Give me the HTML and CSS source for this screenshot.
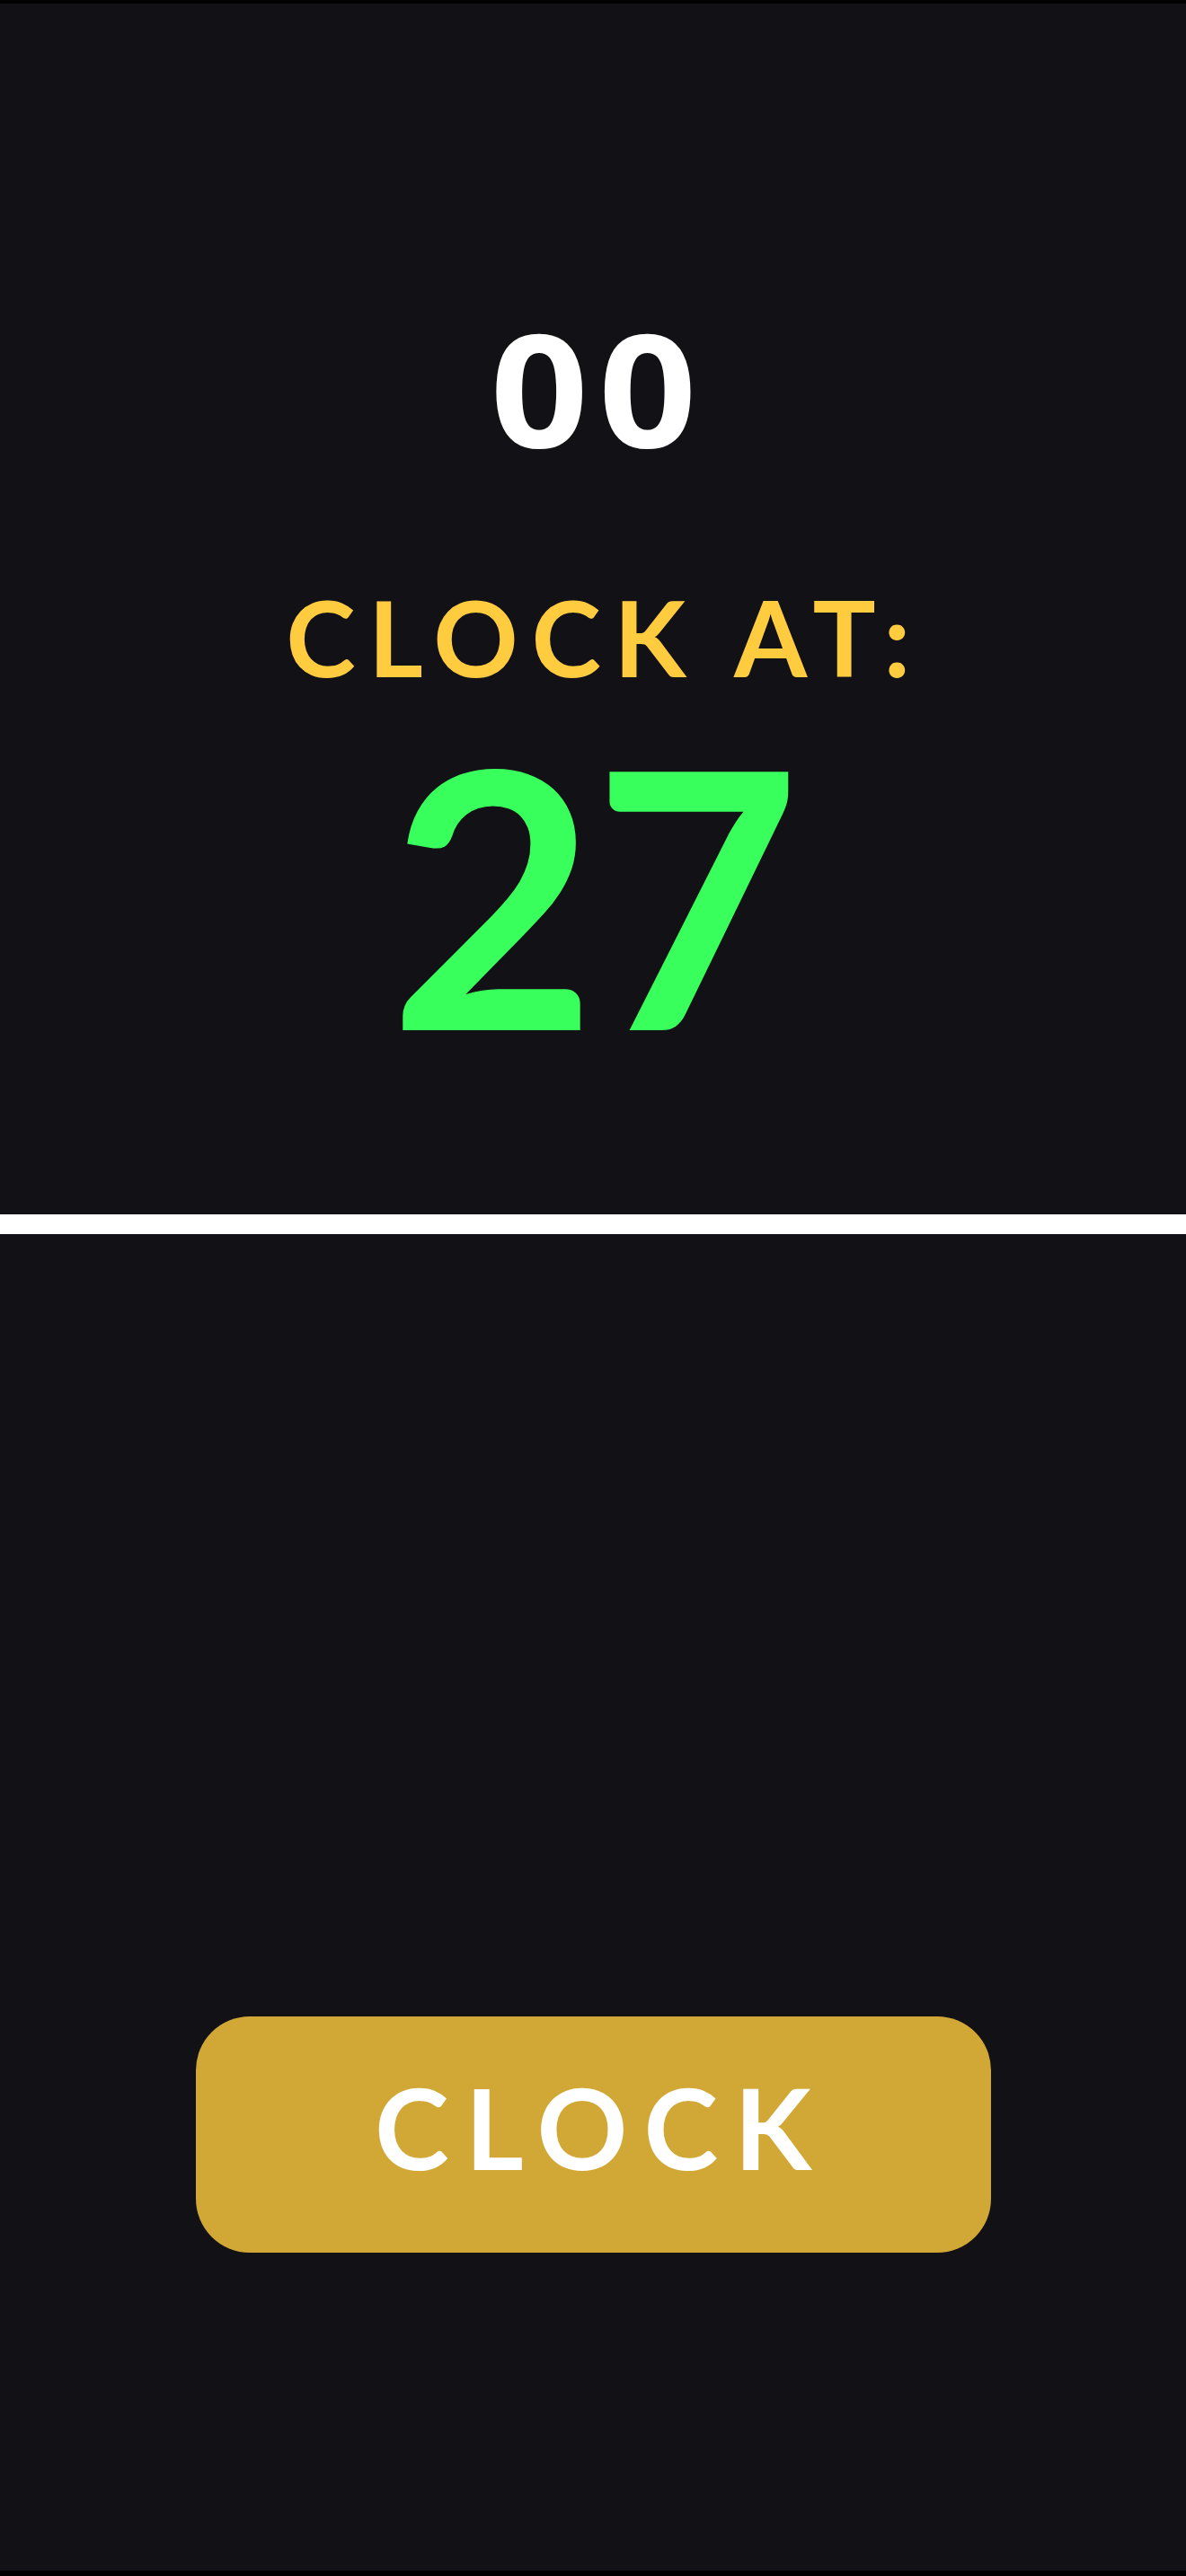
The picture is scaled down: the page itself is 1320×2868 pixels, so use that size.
FILE: index.html
```html
<!DOCTYPE html>
<html lang="en">
<head>
<meta charset="utf-8">
<title>Clock</title>
<link rel="stylesheet" href="styles.css">
</head>
<body>
<div class="screen">
  <section class="top">
    <div class="counter">00</div>
    <div class="label">CLOCK AT:</div>
    <div class="target">27</div>
  </section>
  <div class="divider"></div>
  <section class="bottom">
    <button class="clock-btn" type="button">CLOCK</button>
  </section>
</div>
</body>
</html>
```
FILE: styles.css
```css
html, body {
  margin: 0;
  padding: 0;
  background: #000;
}

.screen {
  width: 1320px;
  height: 2868px;
  box-sizing: border-box;
  border-top: 4px solid #000;
  border-bottom: 6px solid #000;
  background: #121116;
  display: flex;
  flex-direction: column;
  font-family: "Lato", "Open Sans", sans-serif;
}

.top {
  height: 1348px;
  display: flex;
  flex-direction: column;
  align-items: center;
}

.counter {
  margin-top: 327px;
  font-family: "Open Sans", sans-serif;
  font-weight: 700;
  font-size: 174px;
  line-height: 200px;
  height: 200px;
  color: #fff;
  letter-spacing: 10px;
  padding-left: 10px;
  transform: scaleX(1.1);
}

.label {
  margin-top: 118px;
  font-weight: 700;
  font-size: 117px;
  line-height: 120px;
  color: #ffcb3f;
  letter-spacing: 14.5px;
  padding-left: 26px;
}

.target {
  margin-top: 24px;
  font-weight: 700;
  font-size: 398px;
  line-height: 400px;
  color: #38ff5c;
  letter-spacing: -4px;
}

.divider {
  height: 22px;
  background: #fff;
}

.bottom {
  flex: 1;
  display: flex;
  justify-content: center;
  align-items: flex-start;
}

.clock-btn {
  margin-top: 871px;
  width: 885px;
  height: 263px;
  border: none;
  border-radius: 60px;
  background: #d1a836;
  color: #fff;
  font-family: "Lato", sans-serif;
  font-weight: 700;
  font-size: 125px;
  letter-spacing: 18px;
  padding: 0 0 18px 18px;
}
```
